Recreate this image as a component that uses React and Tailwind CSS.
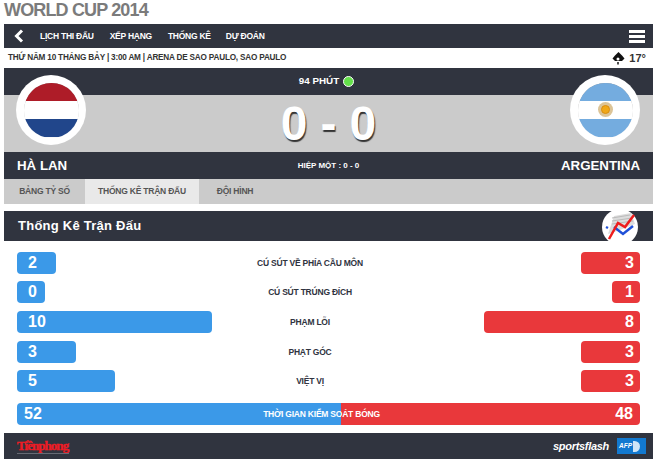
import React from "react";

const rows = [
  { l: 2, r: 3, lw: 39, rw: 59, t: "CÚ SÚT VỀ PHÍA CẦU MÔN", mb: "mb-[7px]" },
  { l: 0, r: 1, lw: 28, rw: 28, t: "CÚ SÚT TRÚNG ĐÍCH", mb: "mb-[8px]" },
  { l: 10, r: 8, lw: 195, rw: 156, t: "PHẠM LỖI", mb: "mb-[8px]" },
  { l: 3, r: 3, lw: 59, rw: 59, t: "PHẠT GÓC", mb: "mb-[7px]" },
  { l: 5, r: 3, lw: 98, rw: 59, t: "VIỆT VỊ", mb: "mb-[11px]" },
];

function Flag({ side, children }) {
  return (
    <div className={`absolute top-[7px] ${side} w-[70px] h-[70px] rounded-full bg-white flex items-center justify-center`}>
      <div className="w-[55px] h-[55px] rounded-full overflow-hidden flex flex-col shadow-[inset_0_2px_3px_rgba(0,0,0,0.5)]">
        {children}
      </div>
    </div>
  );
}

export default function App() {
  return (
    <div className="w-[660px] h-[461px] bg-white overflow-hidden font-['Liberation_Sans',Arial,sans-serif] text-[#30343f]">
      <div className="h-[24px] pl-[4px] text-[18px] leading-[20px] font-bold text-[#7b7b7b] tracking-[-0.85px]">WORLD CUP 2014</div>
      <div className="mx-[4px] w-[649px]">
        <nav className="h-[24px] bg-[#30343f] flex items-center text-white text-[8.5px] tracking-[-0.25px] font-bold">
          <svg width="10" height="14" viewBox="0 0 10 14" className="ml-[10px] mr-[16px]">
            <path d="M8 1.5 L2.5 7 L8 12.5" fill="none" stroke="#fff" strokeWidth="3" />
          </svg>
          <span className="mr-[16px]">LỊCH THI ĐẤU</span>
          <span className="mr-[16px]">XẾP HẠNG</span>
          <span className="mr-[15px]">THỐNG KÊ</span>
          <span>DỰ ĐOÁN</span>
          <div className="ml-auto mr-[8px] w-[16px] flex flex-col gap-[2px]">
            <div className="h-[3px] bg-white" />
            <div className="h-[3px] bg-white" />
            <div className="h-[3px] bg-white" />
          </div>
        </nav>
        <div className="h-[20px] flex items-center justify-between pl-[4px] pr-[7px] text-[8.2px] tracking-[-0.2px] font-bold text-[#333]">
          <span>THỨ NĂM 10 THÁNG BẢY | 3:00 AM | ARENA DE SAO PAULO, SAO PAULO</span>
          <span className="flex items-center gap-[4px] text-[11px] tracking-normal">
            <svg width="13" height="14" viewBox="0 0 13 14">
              <path d="M6.5 1 L10 4.5 L12.5 7.5 L10 10 L3 10 L0.5 7.5 L3 4.5 Z" fill="#111" />
              <circle cx="6" cy="8" r="1.5" fill="#fff" />
              <path d="M6 11 L6 13.5" stroke="#111" strokeWidth="1.5" />
            </svg>
            17°
          </span>
        </div>

        <div className="relative">
          <div className="h-[27px] bg-[#30343f] text-white flex items-center justify-center gap-[4px] text-[9.8px] font-bold pr-[4px]">
            <span>94 PHÚT</span>
            <span className="w-[11px] h-[11px] rounded-full bg-[#63e04a] border border-white" />
          </div>
          <div className="h-[57px] bg-[#cbcbcb] flex items-center justify-center gap-[13px] text-white text-[48px] font-bold leading-none [text-shadow:1px_2px_1px_rgba(0,0,0,0.75)]">
            <span>0</span>
            <span>-</span>
            <span>0</span>
          </div>
          <div className="h-[27px] bg-[#30343f] text-white grid grid-cols-[1fr_auto_1fr] items-center px-[13px]">
            <span className="text-[13.3px] font-bold">HÀ LAN</span>
            <span className="text-[8px] font-bold">HIỆP MỘT : 0 - 0</span>
            <span className="text-[13.3px] font-bold text-right">ARGENTINA</span>
          </div>
          <Flag side="left-[12px]">
            <div className="flex-1 bg-[#ae1c28]" />
            <div className="flex-1 bg-white" />
            <div className="flex-1 bg-[#21468b]" />
          </Flag>
          <Flag side="left-[566px]">
            <div className="flex-1 bg-[#74acdf]" />
            <div className="flex-1 bg-white flex items-center justify-center">
              <div className="w-[15px] h-[15px] rounded-full bg-[#dcc497] flex items-center justify-center">
                <div className="w-[9px] h-[9px] rounded-full bg-[#f0a818] border border-[#d88c10]" />
              </div>
            </div>
            <div className="flex-1 bg-[#74acdf]" />
          </Flag>
        </div>

        <div className="h-[25px] bg-[#cbcbcb] flex text-[8.5px] tracking-[-0.22px] font-bold text-[#555]">
          <div className="w-[81px] flex items-center justify-center">BẢNG TỶ SỐ</div>
          <div className="w-[114px] bg-[#e9e9e9] flex items-center justify-center">THỐNG KÊ TRẬN ĐẤU</div>
          <div className="w-[72px] flex items-center justify-center">ĐỘI HÌNH</div>
        </div>

        <div className="h-[30px] mt-[7px] bg-[#30343f] flex items-center justify-between text-white pl-[14px] pr-[15px]">
          <span className="text-[13px] font-bold tracking-[0.25px]">Thống Kê Trận Đấu</span>
          <div className="h-[32px] -mt-[2px] overflow-hidden">
            <div className="w-[36px] h-[36px] rounded-full bg-white flex items-center justify-center">
              <svg width="32" height="30" viewBox="0 0 32 30">
                <path d="M10 4 L27 1 L31 12 L16 18 L4 22 Z" fill="#dcdcdc" />
                <path d="M8 6 L26 3 M8 9 L28 6 M8 12 L29 9" stroke="#bbb" strokeWidth="1" />
                <path d="M2 15 L4 16" stroke="#1f50d8" strokeWidth="2.5" />
                <path d="M10 15 L19 22 L29 14" fill="none" stroke="#1f50d8" strokeWidth="2.5" />
                <path d="M5 27 L14 11 L21 15 L30 3" fill="none" stroke="#ee1c1c" strokeWidth="2.5" />
              </svg>
            </div>
          </div>
        </div>

        <div className="pt-[11px] px-[13px]">
          {rows.map((r) => (
            <div key={r.t} className={`relative h-[22px] flex items-center justify-between text-white text-[16px] font-bold ${r.mb}`}>
              <div className="h-full bg-[#3b99e8] rounded-[4px] flex items-center pl-[11px]" style={{ width: r.lw }}>{r.l}</div>
              <span className="absolute left-0 right-[37px] text-center text-[8.5px] tracking-[-0.22px] font-bold text-[#30343f]">{r.t}</span>
              <div className="h-full bg-[#e9383b] rounded-[4px] flex items-center justify-end pr-[6px]" style={{ width: r.rw }}>{r.r}</div>
            </div>
          ))}
          <div className="relative h-[22px] flex rounded-[4px] overflow-hidden text-white text-[16px] font-bold">
            <div className="w-[324px] bg-[#3b99e8] flex items-center pl-[7px]">52</div>
            <div className="flex-1 bg-[#e9383b] flex items-center justify-end pr-[7px]">48</div>
            <span className="absolute inset-y-0 left-0 right-[14px] flex items-center justify-center text-[8.5px] tracking-[-0.22px]">THỜI GIAN KIỂM SOÁT BÓNG</span>
          </div>
        </div>

        <footer className="h-[26px] mt-[8px] bg-[#30343f] flex items-center justify-between pl-[13px] pr-[7px]">
          <div className="flex flex-col leading-none">
            <span className="font-['Liberation_Serif',serif] text-[13px] font-bold text-[#ee1c25] tracking-[-0.95px] leading-[13px] [-webkit-text-stroke:0.4px_#ee1c25]">Tiềnphong</span>
            <div className="mt-[1px] h-px w-[52px] bg-[#666a74]" />
          </div>
          <div className="flex items-center gap-[8px]">
            <span className="text-[11px] font-bold italic text-white tracking-[-0.3px]">sportsflash</span>
            <div className="w-[29px] h-[16px] bg-[#1279d0] flex items-center pl-[2px] gap-[1px]">
              <span className="text-[6.5px] font-bold italic text-white">AFP</span>
              <span className="w-[7px] h-[11px] rounded-r-full bg-[#cfe5f7]" />
            </div>
          </div>
        </footer>
      </div>
    </div>
  );
}
